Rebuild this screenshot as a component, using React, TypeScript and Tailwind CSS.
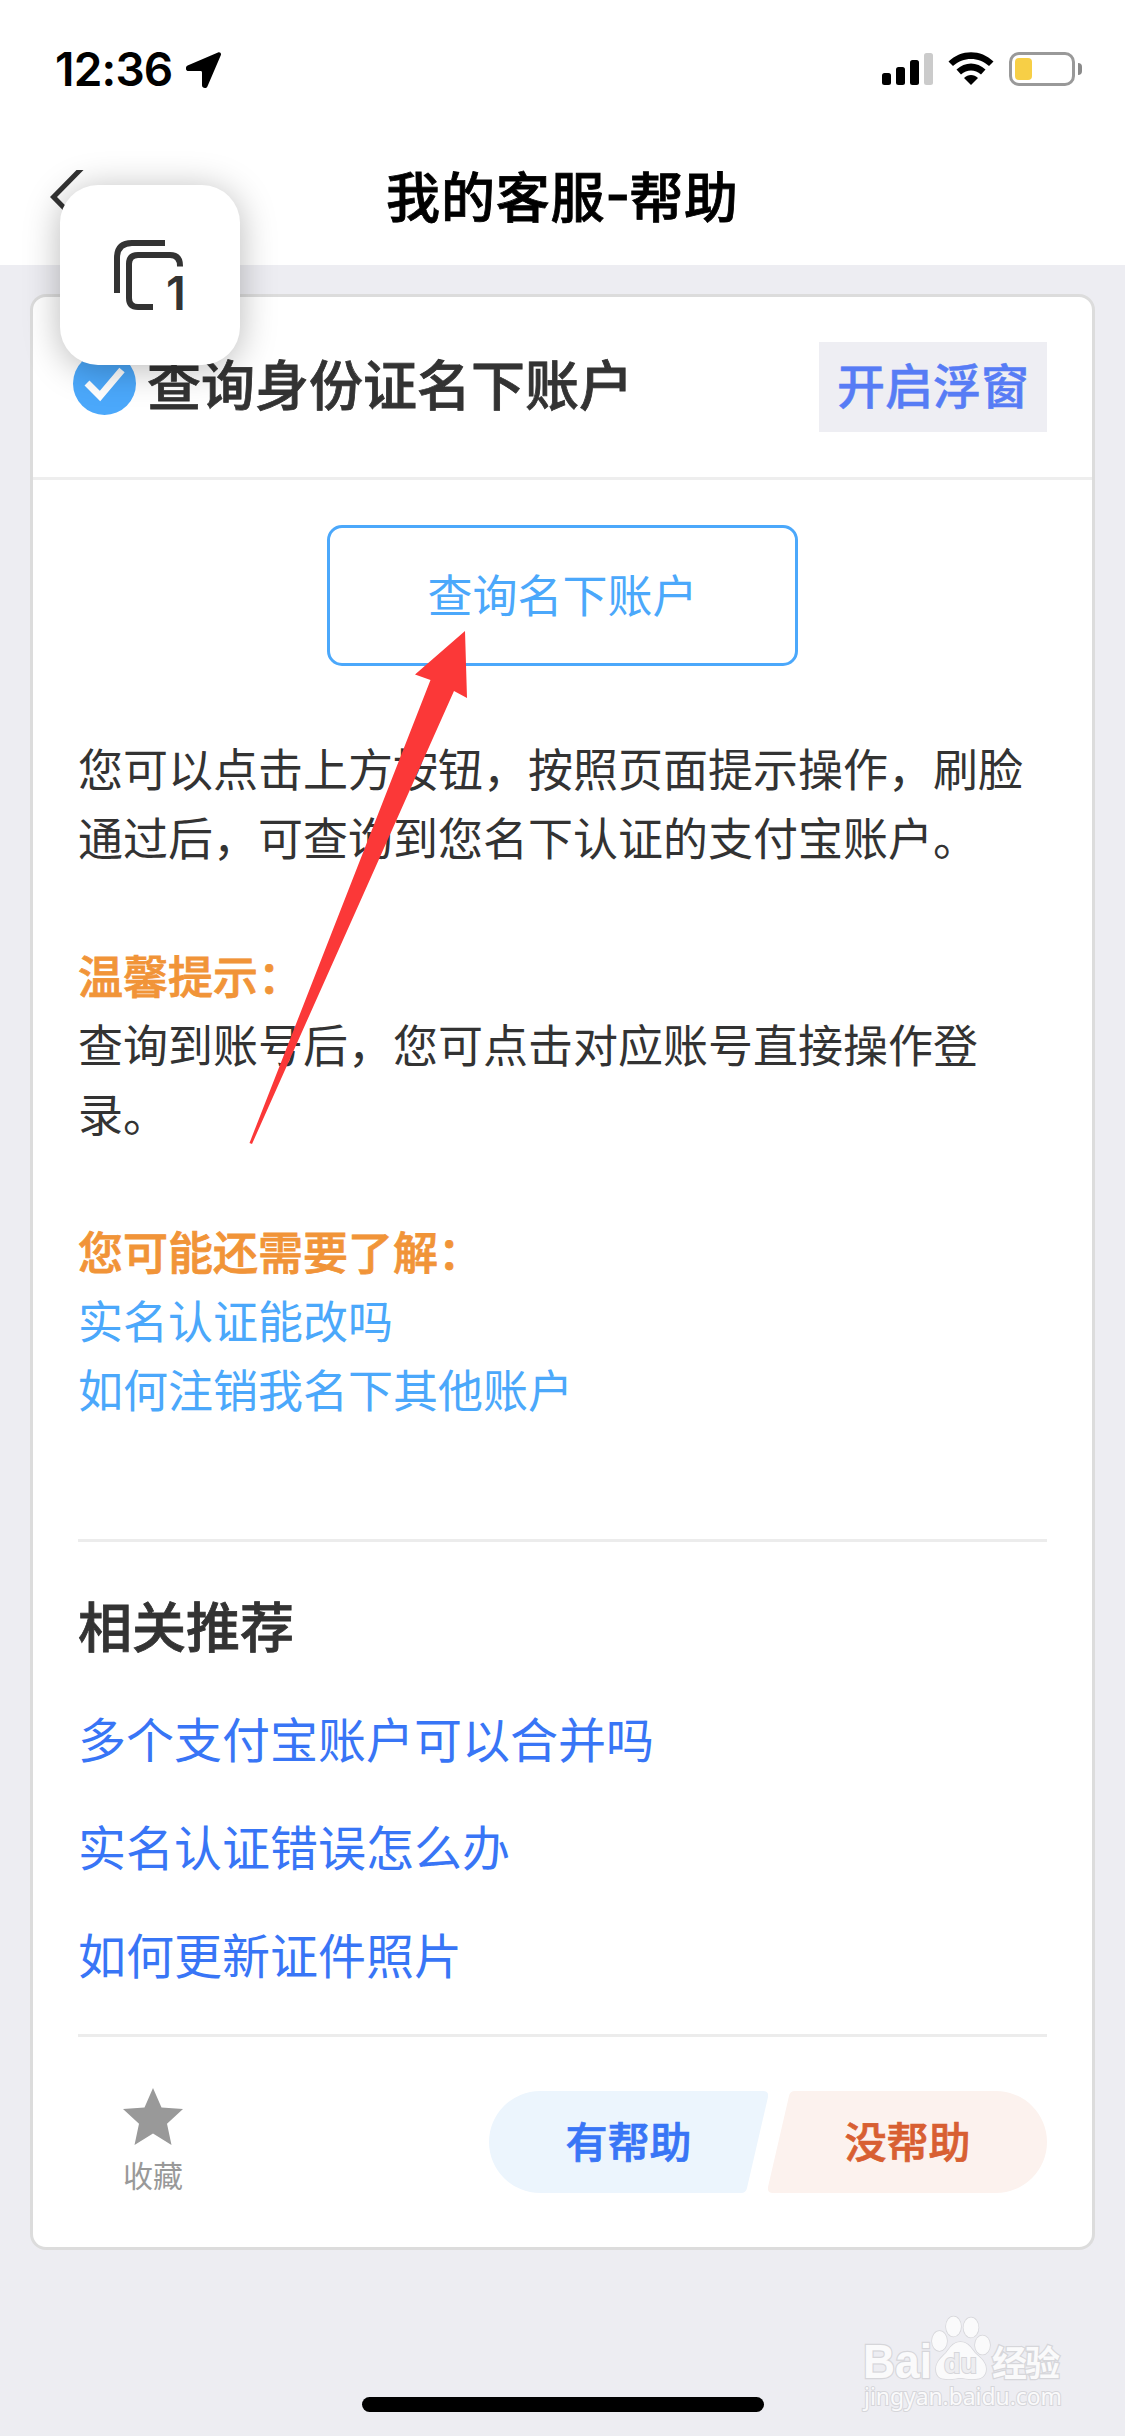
const relatedLinks = ['多个支付宝账户可以合并吗', '实名认证错误怎么办', '如何更新证件照片'];

function StatusBar() {
  return (
    <div className="flex h-[132px] items-start justify-between pt-[50px] pr-[43px] pl-[55px]">
      <div className="flex items-start gap-[12px]">
        <span className="h-[38px] w-[119px] font-['Inter'] text-[46px] leading-[38px] font-semibold tracking-[-0.8px] whitespace-nowrap text-black">12:36</span>
        <svg className="mt-[2px] h-[36px] w-[36px]" viewBox="0 0 36 36" fill="#000">
          <path d="M32 0.4 C34 -0.4 35.6 1.2 34.8 3.2 L21.4 34.4 C20.2 37 16 36.2 16 33.2 L16 20.4 Q16 19 14.6 19 L2.4 19 C-0.6 19 -1 14.8 1.6 13.6 Z" />
        </svg>
      </div>

      <div className="flex items-start pt-[2px]">
        {/* Cell signal */}
        <svg className="mr-[15px] h-[34px] w-[51px]" viewBox="0 0 51 34">
          <rect x="0" y="21" width="9" height="12" rx="2.5" />
          <rect x="14" y="15" width="9" height="18" rx="2.5" />
          <rect x="28" y="8" width="9" height="25" rx="2.5" />
          <rect x="42" y="1" width="9" height="32" rx="2.5" fill="#cbcbcb" />
        </svg>
        {/* Wifi */}
        <svg className="mr-[15px] h-[34px] w-[46px]" viewBox="0 0 46 34" fill="#000">
          <path d="M0.5 9.5 C13 -3 33 -3 45.5 9.5 L41 14 C31 4.5 15 4.5 5 14 Z" />
          <path d="M8.5 17.5 C17 9.5 29 9.5 37.5 17.5 L33 22.5 C27 17 19 17 13 22.5 Z" />
          <path d="M16 26 C20 22 26 22 30 26 L23 33 Z" />
        </svg>
        {/* Battery */}
        <div className="flex items-center gap-[3px]">
          <div className="flex h-[34px] w-[66px] items-center rounded-[10px] border-[3px] border-[#999] pl-[3px]">
            <div className="h-[22px] w-[17px] rounded-[4px] bg-[#f7cf46]" />
          </div>
          <div className="h-[12px] w-[4px] rounded-r-full bg-[#8a8a8a]" />
        </div>
      </div>
    </div>
  );
}

function NavBar() {
  return (
    <div className="relative flex h-[133px] items-start justify-center pt-[23px]">
      <svg className="absolute top-[38px] left-[50px] h-[56px] w-[35px]" viewBox="0 0 35 56" fill="none" stroke="#333" strokeWidth="5">
        <path d="M32 -2 L3.5 27 L32 56" />
      </svg>
      <h1 className="flex text-[54px] leading-[80px] font-medium tracking-[0.8px] text-black [-webkit-text-stroke:0.8px]">
        我的客服<span className="w-[24px] text-center font-['Inter']">-</span>帮助
      </h1>
    </div>
  );
}

function FloatingTabs() {
  return (
    <div className="absolute top-[185px] left-[60px] h-[180px] w-[180px] rounded-[38px] bg-white shadow-[0_4px_36px_rgba(0,0,0,0.28)]">
      <svg className="absolute top-[54px] left-[53px] h-[72px] w-[72px]" viewBox="0 0 72 72" fill="none" stroke="#333" strokeWidth="6">
        <path d="M4 54 V19 Q4 4 19 4 H52" />
        <path d="M40 68 H25 Q16 68 16 59 V25 Q16 16 25 16 H57 Q67 16 67 27 V27.500" />
      </svg>
      <span className="absolute top-[89px] left-[106px] font-['Inter'] text-[47px] leading-[38px] font-semibold text-[#333]">1</span>
    </div>
  );
}

function CardHeader() {
  return (
    <div className="flex h-[183px] items-center justify-between border-b-[3px] border-[#eee] pr-[45px] pl-[40px]">
      <div className="flex items-center gap-[11px]">
        <svg className="mt-[-8px] h-[63px] w-[63px]" viewBox="0 0 63 63">
          <circle cx="31.500" cy="31.500" r="31.500" fill="#4ba8fb" />
          <path d="M14 31 L27 44 L49 18" fill="none" stroke="#fff" strokeWidth="7" />
        </svg>
        <h2 className="mt-[-8px] text-[54px] leading-[80px] font-medium text-[#333] [-webkit-text-stroke:0.8px]">查询身份证名下账户</h2>
      </div>
      <button className="h-[90px] w-[228px] bg-[#eeeef3] pb-[8px] text-[48px] leading-[82px] font-medium text-[#577cf5] [-webkit-text-stroke:0.5px]">开启浮窗</button>
    </div>
  );
}

function Feedback() {
  return (
    <div className="flex h-[213px] items-start justify-between border-t-[3px] border-[#ececec] pl-[45px]">
      <div className="flex flex-col items-center pt-[51px]">
        <svg className="h-[57px] w-[60px]" viewBox="0 0 60 60" preserveAspectRatio="none" fill="#999">
          <path d="M30 0 L38.500 20.500 L60 22 L44 37.500 L48.500 60 L30 48 L11.500 60 L16 37.500 L0 22 L21.500 20.500 Z" />
        </svg>
        <span className="mt-[8px] text-[30px] leading-[42px] text-[#999]">收藏</span>
      </div>

      <div className="mt-[54px] flex">
        <button className="relative h-[102px] w-[279px]">
          <svg className="absolute inset-0 h-full w-full" viewBox="0 0 279 102" fill="#ecf5fd">
            <path d="M51 0 H274 Q280 0 279 6 L258 97 Q257 102 252 102 H51 A51 51 0 0 1 51 0 Z" />
          </svg>
          <span className="relative block h-[102px] text-[42px] leading-[98px] font-medium text-[#3875f6] [-webkit-text-stroke:0.7px]">有帮助</span>
        </button>
        <button className="relative h-[102px] w-[279px]">
          <svg className="absolute inset-0 h-full w-full" viewBox="0 0 279 102" fill="#fcf2ee">
            <path d="M228 102 H5 Q-1 102 0 96 L21 5 Q22 0 27 0 H228 A51 51 0 0 1 228 102 Z" />
          </svg>
          <span className="relative block h-[102px] text-[42px] leading-[98px] font-medium text-[#d85f32] [-webkit-text-stroke:0.7px]">没帮助</span>
        </button>
      </div>
    </div>
  );
}

function Watermark() {
  return (
    <svg className="absolute top-[2310px] left-[855px] h-[106px] w-[216px]" viewBox="0 0 216 106" fill="#fafafb" stroke="#d6d6da" strokeWidth="2.500" paintOrder="stroke">
      <ellipse cx="84.500" cy="31" rx="7.500" ry="10" strokeWidth="1.500" />
      <ellipse cx="98.500" cy="16.500" rx="7.500" ry="10" strokeWidth="1.500" />
      <ellipse cx="116" cy="17.500" rx="7.500" ry="10" strokeWidth="1.500" />
      <ellipse cx="127.500" cy="35" rx="7.500" ry="9.500" strokeWidth="1.500" />
      <path strokeWidth="1.500" d="M105.500 32 C113 32 116 38 120 43 C127 49 131 53 131 59 C131 66 126 69 120 69 C114 70 110 68 105.500 68 C101 68 97 70 91 69 C85 69 81 66 81 59 C81 52 86 48 91 43 C95 38 98 32 105.500 32 Z" />
      <text x="8" y="68" fontFamily="Liberation Sans" fontWeight="700" fontSize="48" textLength="69" lengthAdjust="spacingAndGlyphs">Bai</text>
      <text x="89" y="63" fontFamily="Liberation Sans" fontWeight="700" fontSize="28" textLength="33" lengthAdjust="spacingAndGlyphs" fill="#ededf0" strokeWidth="2">du</text>
      <text x="137" y="66" fontFamily="Noto Sans CJK SC" fontWeight="700" fontSize="35" textLength="68">经验</text>
      <text x="9" y="95" fontFamily="Noto Sans" fontSize="23" textLength="198" lengthAdjust="spacingAndGlyphs" strokeWidth="2">jingyan.baidu.com</text>
    </svg>
  );
}

export default function App() {
  return (
    <div className="relative flex h-[2436px] w-[1125px] flex-col overflow-hidden bg-[#ededf2] font-['Noto_Sans_CJK_SC',sans-serif]">
      <header className="h-[265px] bg-white">
        <StatusBar />
        <NavBar />
      </header>

      <main className="mx-[30px] mt-[29px] h-[1956px] rounded-[16px] border-[3px] border-[#dcdcdc] bg-white">
        <CardHeader />

        <div className="px-[45px]">
          <div className="flex justify-center pt-[45px]">
            <button className="h-[141px] w-[471px] rounded-[15px] border-[3px] border-[#4ba8fb] pb-[4px] text-[45px] text-[#4ba8fb]">查询名下账户</button>
          </div>

          {/* Answer body */}
          <div className="h-[873px] pt-[67px] text-[45px] leading-[69px] text-[#333]">
            <p>您可以点击上方按钮，按照页面提示操作，刷脸通过后，可查询到您名下认证的支付宝账户。</p>
            <p className="mt-[69px] font-medium text-[#f19438] [-webkit-text-stroke:0.8px]">温馨提示：</p>
            <p>查询到账号后，您可点击对应账号直接操作登录。</p>
            <p className="mt-[69px] font-medium text-[#f19438] [-webkit-text-stroke:0.8px]">您可能还需要了解：</p>
            <p className="text-[#4ba8fb]">实名认证能改吗</p>
            <p className="text-[#4ba8fb]">如何注销我名下其他账户</p>
          </div>

          {/* Related questions */}
          <section className="h-[495px] border-t-[3px] border-[#ececec] pt-[44px]">
            <h3 className="text-[54px] leading-[78px] font-medium text-[#333] [-webkit-text-stroke:0.8px]">相关推荐</h3>
            <ul className="pt-[19px]">
              {relatedLinks.map((link) => (
                <li key={link} className="h-[108px] text-[48px] leading-[108px] text-[#3875f6]">
                  {link}
                </li>
              ))}
            </ul>
          </section>

          <Feedback />
        </div>
      </main>

      <FloatingTabs />

      {/* Pointer arrow drawn over the page */}
      <svg className="pointer-events-none absolute top-[620px] left-[240px] h-[530px] w-[240px]" viewBox="240 620 240 530" fill="#fb3838">
        <path d="M465 631 L467 698 L454 691 L252 1144 L249.500 1143 L430.500 680 L415 674.500 Z" />
      </svg>

      <Watermark />
      <div className="absolute top-[2397px] left-[362px] h-[15px] w-[402px] rounded-full bg-black" />
    </div>
  );
}
